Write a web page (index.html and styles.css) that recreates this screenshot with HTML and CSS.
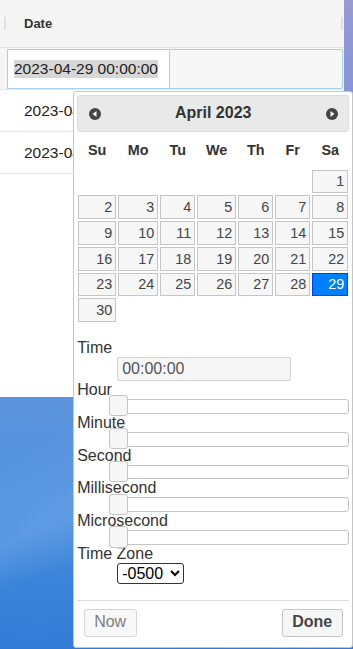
FILE: index.html
```html
<!DOCTYPE html>
<html lang="en">
<head>
    <meta charset="UTF-8">
    <meta name="viewport" content="width=device-width, initial-scale=1.0">
    <title>Date editor</title>
    <link rel="stylesheet" href="styles.css">
</head>
<body>
    <div class="window">
        <div class="grid-head">
            <span class="col-sep"></span>
            <span class="col-title">Date</span>
            <span class="col-sep col-sep-end"></span>
        </div>
        <div class="grid-row editing">
            <div class="cell-input"><span class="selected-text">2023-04-29 00:00:00</span></div>
            <div class="cell-rest"></div>
        </div>
        <!-- the popup covers the rest of these cells -->
        <div class="grid-row"><span class="cell-text">2023-04-28 00:00:00</span></div>
        <div class="grid-row"><span class="cell-text">2023-04-27 00:00:00</span></div>
    </div>

    <!-- datepicker popup, opened under the edited cell -->
    <div class="datepicker">
        <div class="dp-header">
            <a class="dp-nav" title="Prev">
                <svg width="16" height="16" viewBox="0 0 16 16"><circle cx="8" cy="8" r="6" fill="#444"/><polygon points="9.5,5 5.5,8 9.5,11" fill="#fff"/></svg>
            </a>
            <div class="dp-title">April 2023</div>
            <a class="dp-nav" title="Next">
                <svg width="16" height="16" viewBox="0 0 16 16"><circle cx="8" cy="8" r="6" fill="#444"/><polygon points="6.5,5 10.5,8 6.5,11" fill="#fff"/></svg>
            </a>
        </div>

        <table class="dp-calendar">
            <colgroup>
                <col class="c-su"><col class="c-mo"><col class="c-tu"><col class="c-we"><col class="c-th"><col class="c-fr"><col class="c-sa">
            </colgroup>
            <thead>
                <tr><th>Su</th><th>Mo</th><th>Tu</th><th>We</th><th>Th</th><th>Fr</th><th>Sa</th></tr>
            </thead>
            <tbody>
                <tr><td></td><td></td><td></td><td></td><td></td><td></td><td><a class="day">1</a></td></tr>
                <tr><td><a class="day">2</a></td><td><a class="day">3</a></td><td><a class="day">4</a></td><td><a class="day">5</a></td><td><a class="day">6</a></td><td><a class="day">7</a></td><td><a class="day">8</a></td></tr>
                <tr><td><a class="day">9</a></td><td><a class="day">10</a></td><td><a class="day">11</a></td><td><a class="day">12</a></td><td><a class="day">13</a></td><td><a class="day">14</a></td><td><a class="day">15</a></td></tr>
                <tr><td><a class="day">16</a></td><td><a class="day">17</a></td><td><a class="day">18</a></td><td><a class="day">19</a></td><td><a class="day">20</a></td><td><a class="day">21</a></td><td><a class="day">22</a></td></tr>
                <tr><td><a class="day">23</a></td><td><a class="day">24</a></td><td><a class="day">25</a></td><td><a class="day">26</a></td><td><a class="day">27</a></td><td><a class="day">28</a></td><td><a class="day active">29</a></td></tr>
                <tr><td><a class="day">30</a></td><td></td><td></td><td></td><td></td><td></td><td></td></tr>
            </tbody>
        </table>

        <dl class="tp">
            <dt>Time</dt>
            <dd><input class="tp-time" type="text" value="00:00:00" readonly></dd>
            <dt>Hour</dt>
            <dd><div class="slider"><span class="handle"></span></div></dd>
            <dt>Minute</dt>
            <dd><div class="slider"><span class="handle"></span></div></dd>
            <dt>Second</dt>
            <dd><div class="slider"><span class="handle"></span></div></dd>
            <dt>Millisecond</dt>
            <dd><div class="slider"><span class="handle"></span></div></dd>
            <dt>Microsecond</dt>
            <dd><div class="slider"><span class="handle"></span></div></dd>
            <dt>Time Zone</dt>
            <dd>
                <select class="tp-zone">
                    <option>-0500</option>
                    <option>+0000</option>
                </select>
            </dd>
        </dl>

        <div class="dp-buttons">
            <button class="secondary">Now</button>
            <button class="primary">Done</button>
        </div>
    </div>
</body>
</html>
```

FILE: styles.css
```css
body {
    margin: 0;
    height: 649px;
    position: relative;
    overflow: hidden;
    font-family: 'Liberation Sans', Arial, sans-serif;
    font-size: 16px;
    background:
        linear-gradient(160deg, rgba(255, 255, 255, 0) 58%, rgba(130, 180, 240, 0.35) 70%, rgba(255, 255, 255, 0) 76%),
        linear-gradient(100deg, rgba(255, 255, 255, 0) 50%, rgba(110, 100, 205, 0.2) 100%),
        linear-gradient(176deg, #a0a2d3 0%, #8e9cd8 14%, #6d9ade 45%, #5c95dd 60%, #4f90dd 75%, #3a83d9 88%, #2f79d6 100%);
}

/* grid window */
.window {
    width: 344px;
    height: 397px;
    background: #fff;
}

.grid-head {
    height: 48px;
    box-sizing: border-box;
    display: flex;
    align-items: center;
    background: #f5f5f5;
    border-bottom: 1px solid #e2e2e2;
}

.col-sep {
    width: 2px;
    height: 13px;
    margin-left: 4px;
    background: #e0e0e0;
}

.col-sep-end {
    margin-left: auto;
    margin-right: 1px;
}

.col-title {
    margin-left: 18px;
    font-size: 13px;
    font-weight: bold;
    color: #333;
}

.grid-row {
    height: 42px;
    box-sizing: border-box;
    display: flex;
    align-items: center;
    border-bottom: 1px solid #e6e6e6;
}

.grid-row.editing {
    align-items: flex-start;
    padding: 1px 0 0 7px;
    background: #f5f5f5;
}

.cell-input {
    width: 163px;
    height: 40px;
    box-sizing: border-box;
    display: flex;
    align-items: center;
    padding-left: 6px;
    background: #fff;
    border: 1px solid #a9cff2;
}

.selected-text {
    background: #d7d7d7;
    font-size: 15.5px;
    color: #222;
}

.cell-rest {
    width: 173px;
    height: 40px;
    box-sizing: border-box;
    background: #f7f7f7;
    border: 1px solid #a9cff2;
    border-left: none;
    border-radius: 0 3px 3px 0;
}

.cell-text {
    padding-left: 24px;
    font-size: 15.5px;
    color: #222;
    white-space: nowrap;
}

/* datepicker popup */
.datepicker {
    position: absolute;
    left: 73px;
    top: 91px;
    width: 17em;
    padding: .2em;
    background: #fff;
    color: #333;
    border: 1px solid #c5c5c5;
    border-radius: 3px;
}

.dp-header {
    display: flex;
    align-items: center;
    padding: .2em 0;
    background: #e9e9e9;
    border: 1px solid #ddd;
    border-radius: 3px;
    font-weight: bold;
}

.dp-nav {
    width: 1.8em;
    height: 1.8em;
    margin: 0 2px;
    display: flex;
    align-items: center;
    justify-content: center;
}

.dp-title {
    flex: 1;
    text-align: center;
    line-height: 1.8em;
}

.dp-calendar {
    width: 100%;
    table-layout: fixed;
    border-collapse: collapse;
    font-size: .9em;
    margin: 0 0 .4em;
}

.c-su { width: 40px; }
.c-mo { width: 42px; }
.c-tu { width: 37px; }
.c-we { width: 41px; }
.c-th { width: 37px; }
.c-fr { width: 37px; }
.c-sa { width: 38px; }

.dp-calendar th {
    padding: .7em 0;
    text-align: center;
    font-weight: bold;
}

.dp-calendar td {
    padding: 1px;
}

.day {
    display: block;
    padding: .2em;
    text-align: right;
    color: #454545;
    background: #f6f6f6;
    border: 1px solid #c5c5c5;
}

.day.active {
    color: #fff;
    background: #007fff;
    border-color: #003eff;
}

/* time picker */
.tp {
    margin: 16px 0 0;
}

.tp dt {
    color: #333;
}

.tp dd {
    margin-left: 40px;
}

.tp-time {
    width: 174px;
    height: 24px;
    box-sizing: border-box;
    margin: 0;
    padding: 0 4px;
    font: inherit;
    color: #555;
    background: #f6f6f6;
    border: 1px solid #d3d3d3;
    border-radius: 2px;
    outline: none;
}

.slider {
    position: relative;
    height: .8em;
    background: #fff;
    border: 1px solid #c5c5c5;
    border-radius: 3px;
}

.handle {
    position: absolute;
    top: -.3em;
    left: 0;
    margin-left: -.6em;
    width: 1.1em;
    height: 1.2em;
    background: #f6f6f6;
    border: 1px solid #c5c5c5;
    border-radius: 3px;
}

.tp-zone {
    margin: 0;
    font-family: inherit;
    font-size: 16px;
    color: #000;
    background: #fff;
    border: 1px solid #333;
    border-radius: 3px;
}

.dp-buttons {
    display: flex;
    justify-content: space-between;
    margin-top: 16px;
    padding: 0 .2em;
    border-top: 1px solid #ddd;
}

.dp-buttons button {
    margin: .5em .2em .4em;
    padding: .2em .6em .3em;
    font-family: inherit;
    font-size: 16px;
    line-height: normal;
    color: #454545;
    background: #f6f6f6;
    border: 1px solid #c5c5c5;
    border-radius: 3px;
    cursor: pointer;
}

.dp-buttons .secondary {
    opacity: .7;
}

.dp-buttons .primary {
    font-weight: bold;
}
```
